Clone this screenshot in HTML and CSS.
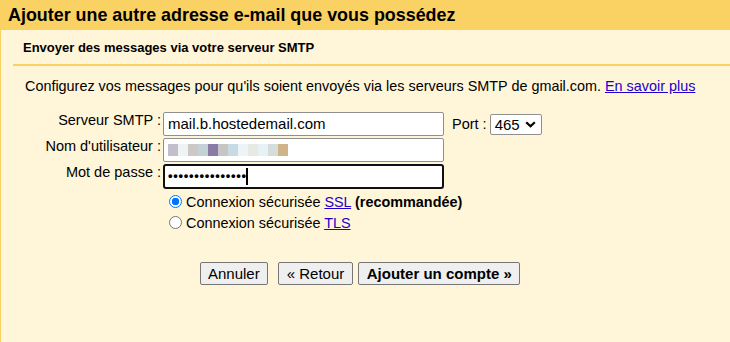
FILE: index.html
```html
<!DOCTYPE html>
<html lang="fr">
<head>
<meta charset="utf-8">
<link rel="stylesheet" href="styles.css">
</head>
<body>
<div class="header">Ajouter une autre adresse e-mail que vous possédez</div>
<div class="panel">
  <div class="subtitle">Envoyer des messages via votre serveur SMTP</div>
  <div class="rule"></div>
  <p class="intro">Configurez vos messages pour qu'ils soient envoyés via les serveurs SMTP de gmail.com. <a href="#">En savoir plus</a></p>
  <div class="form">
    <div class="row">
      <label class="lbl">Serveur SMTP :</label>
      <div class="field">mail.b.hostedemail.com</div>
      <span class="port-lbl">Port :</span>
      <div class="select">465<svg class="chev" width="11" height="7" viewBox="0 0 11 7"><path d="M1.2 1.2 L5.5 5.3 L9.8 1.2" fill="none" stroke="#000" stroke-width="2.2"/></svg></div>
    </div>
    <div class="row">
      <label class="lbl">Nom d'utilisateur :</label>
      <div class="field blur">
        <span class="px" style="background:#c2bfca"></span><span class="px" style="background:#eef3f6"></span><span class="px" style="background:#cbc8c6"></span><span class="px" style="background:#c5d1d6"></span><span class="px" style="background:#897ba6"></span><span class="px" style="background:#c8c6c4"></span><span class="px" style="background:#c6dbe3"></span><span class="px" style="background:#eef3f7"></span><span class="px" style="background:#e7e9e5"></span><span class="px" style="background:#e8f1f6"></span><span class="px" style="background:#d5dedb"></span><span class="px" style="background:#cfb48a"></span>
      </div>
    </div>
    <div class="row">
      <label class="lbl">Mot de passe :</label>
      <div class="field focus"><span class="dots">•••••••••••••••</span><span class="caret"></span></div>
    </div>
    <div class="radios">
      <div class="radio-row"><span class="radio on"></span><span>Connexion sécurisée <a href="#">SSL</a> <b>(recommandée)</b></span></div>
      <div class="radio-row"><span class="radio"></span><span>Connexion sécurisée <a href="#">TLS</a></span></div>
    </div>
    <div class="buttons">
      <button class="btn">Annuler</button>
      <button class="btn back">« Retour</button>
      <button class="btn primary">Ajouter un compte »</button>
    </div>
  </div>
</div>
</body>
</html>
```
FILE: styles.css
```css
html, body {
  margin: 0;
  padding: 0;
  height: 100%;
}
body {
  font-family: "Liberation Sans", Arial, sans-serif;
  font-size: 14.5px;
  color: #000;
  background: #fff5d8;
  display: flex;
  flex-direction: column;
  overflow: hidden;
}
.header {
  background: #fad163;
  height: 30px;
  line-height: 30px;
  padding-left: 8px;
  font-weight: bold;
  font-size: 17.9px;
  flex: none;
}
.panel {
  flex: 1;
  border-left: 1px solid #fad163;
}
.subtitle {
  font-weight: bold;
  font-size: 13px;
  padding: 10px 0 0 22px;
  height: 24px;
  line-height: 16px;
}
.rule {
  margin-left: 12px;
  height: 2px;
  background: #fad163;
}
.intro {
  margin: 12px 0 0 24px;
  line-height: 16px;
  font-size: 14.4px;
}
a {
  color: #2200cc;
  text-decoration: underline;
}
.form {
  margin-top: 17px;
  padding-left: 7px;
}
.row {
  display: flex;
  align-items: center;
  height: 26px;
}
.lbl {
  width: 153px;
  text-align: right;
  padding-right: 2px;
  align-self: flex-start;
  padding-top: 1px;
}
.field {
  box-sizing: border-box;
  width: 281px;
  height: 24px;
  border: 1px solid #8f8f8f;
  border-radius: 2px;
  background: #fff;
  font-size: 15px;
  line-height: 22px;
  padding-left: 4px;
  display: flex;
  align-items: center;
}
.blur {
  padding-left: 4px;
}
.px {
  display: inline-block;
  width: 10px;
  height: 12px;
}
.focus {
  border: 2px solid #101010;
  border-radius: 3px;
  padding-left: 3px;
  height: 25px;
}
.dots {
  font-size: 13px;
  letter-spacing: 0.7px;
  font-weight: bold;
}
.caret {
  display: inline-block;
  width: 2px;
  height: 17px;
  background: #000;
  margin-left: -1px;
}
.port-lbl {
  margin-left: 8px;
  font-size: 14.5px;
  margin-right: 3px;
}
.select {
  box-sizing: border-box;
  height: 21px;
  width: 52px;
  border: 1px solid #8f8f8f;
  border-radius: 2px;
  background: #fff;
  font-size: 15px;
  display: flex;
  align-items: center;
  padding-left: 4px;
  gap: 5px;
}
.radios {
  padding-left: 161px;
  margin-top: 2px;
}
.radio-row {
  display: flex;
  align-items: center;
  height: 21px;
  font-size: 14.4px;
}
.radio-row b {
  font-weight: bold;
}
.radio {
  box-sizing: border-box;
  width: 13px;
  height: 13px;
  border-radius: 50%;
  border: 1px solid #767676;
  background: #fff;
  margin-right: 4px;
}
.radio.on {
  border: 1px solid #0075ff;
  background: radial-gradient(circle, #0075ff 0 3.5px, #fff 4px);
}
.buttons {
  display: flex;
  gap: 10px;
  padding-left: 192px;
  margin-top: 29px;
}
.btn {
  font-family: "Liberation Sans", Arial, sans-serif;
  font-size: 15px;
  height: 23px;
  padding: 0 7px;
  border: 1px solid #767676;
  border-radius: 2px;
  background: #efefef;
  color: #000;
}
.btn.back {
  padding: 0 8px;
}
.btn.primary {
  font-weight: bold;
  padding: 0 7.5px;
  margin-left: -5px;
}
```
